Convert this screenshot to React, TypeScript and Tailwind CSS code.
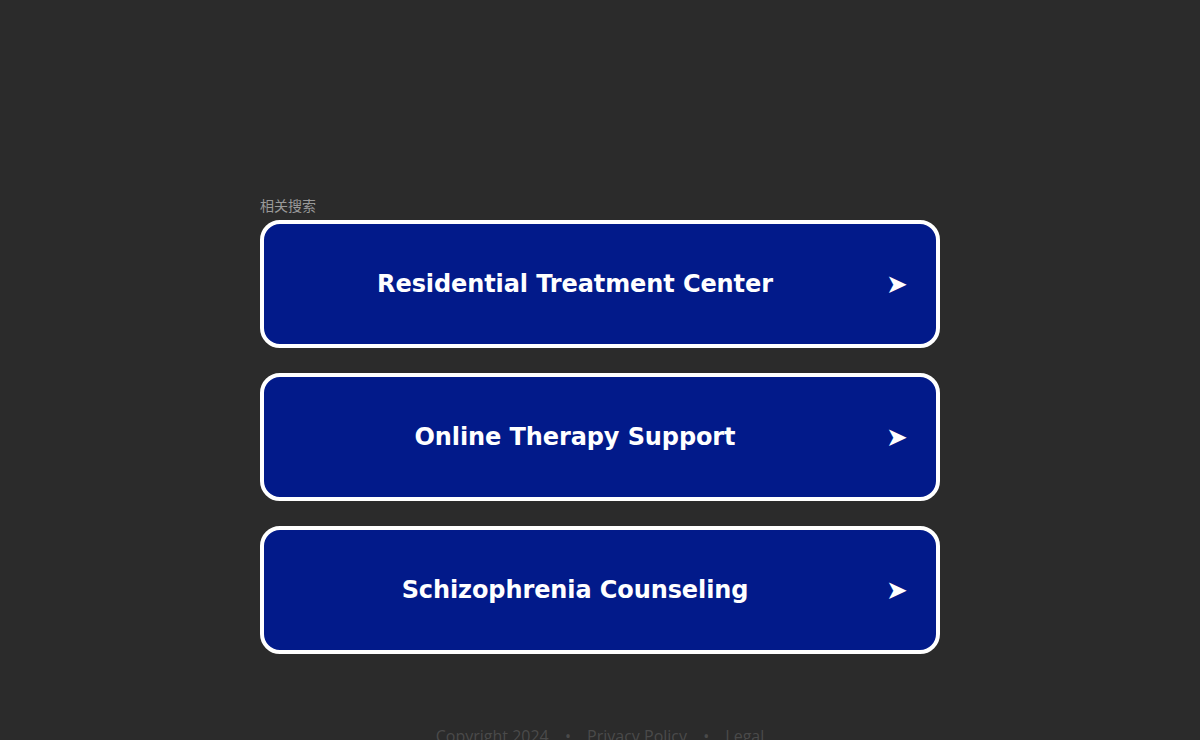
import React from "react";

const links = [
  "Residential Treatment Center",
  "Online Therapy Support",
  "Schizophrenia Counseling",
];

export default function App() {
  return (
    <div className="min-h-[740px] bg-[#2b2b2b] overflow-hidden" style={{ fontFamily: '"DejaVu Sans", Verdana, sans-serif' }}>
      <div className="mx-auto w-[680px] pt-[196px]">
        <div
          className="mb-[6px] text-[14px] leading-[18px] text-[#999999]"
          style={{ fontFamily: '"Noto Sans CJK SC", "Noto Sans", sans-serif' }}
        >
          相关搜索
        </div>
        <div className="flex flex-col gap-[25px]">
          {links.map((t) => (
            <a
              key={t}
              href="#"
              className="flex h-[128px] items-center rounded-[20px] border-[4px] border-white bg-[#021a8a] text-white no-underline"
            >
              <span className="flex-1 text-center text-[24px] font-bold tracking-[-0.1px]">{t}</span>
              <span className="mr-[28px] w-[22px] text-[26px] leading-none">➤</span>
            </a>
          ))}
        </div>
      </div>
      <div
        className="mt-[70px] text-center text-[16px] text-[#4a4a4a]"
        style={{ fontFamily: '"Open Sans", sans-serif' }}
      >
        Copyright 2024 <span className="mx-[12px]">•</span> Privacy Policy{" "}
        <span className="mx-[12px]">•</span> Legal
      </div>
    </div>
  );
}
